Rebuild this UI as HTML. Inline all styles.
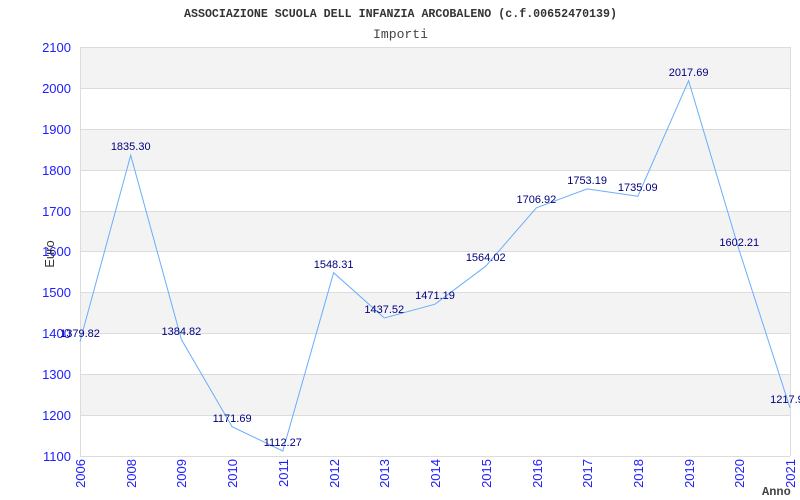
<!DOCTYPE html>
<html><head><meta charset="utf-8"><style>html,body{margin:0;padding:0;background:#fff;width:800px;height:500px;overflow:hidden}</style></head>
<body>
<svg width="800" height="500" viewBox="0 0 800 500" xmlns="http://www.w3.org/2000/svg">
<text x="184" y="17" font-family="Liberation Mono, monospace" font-size="12" font-weight="bold" fill="#333" textLength="433" lengthAdjust="spacingAndGlyphs">ASSOCIAZIONE SCUOLA DELL INFANZIA ARCOBALENO (c.f.00652470139)</text>
<text x="373" y="38" font-family="Liberation Mono, monospace" font-size="13" fill="#444" textLength="55" lengthAdjust="spacingAndGlyphs">Importi</text>
<g fill="#f3f3f3">
<rect x="80" y="47" width="710" height="41"/>
<rect x="80" y="129" width="710" height="41"/>
<rect x="80" y="211" width="710" height="41"/>
<rect x="80" y="292" width="710" height="41"/>
<rect x="80" y="374" width="710" height="41"/>
</g>
<g stroke="#dcdcdc" stroke-width="1">
<line x1="80" y1="47.5" x2="790" y2="47.5"/><line x1="80" y1="88.5" x2="790" y2="88.5"/>
<line x1="80" y1="129.5" x2="790" y2="129.5"/><line x1="80" y1="170.5" x2="790" y2="170.5"/>
<line x1="80" y1="211.5" x2="790" y2="211.5"/><line x1="80" y1="251.5" x2="790" y2="251.5"/>
<line x1="80" y1="292.5" x2="790" y2="292.5"/><line x1="80" y1="333.5" x2="790" y2="333.5"/>
<line x1="80" y1="374.5" x2="790" y2="374.5"/><line x1="80" y1="415.5" x2="790" y2="415.5"/>
<line x1="80" y1="456.5" x2="790" y2="456.5"/>
<line x1="80.5" y1="47" x2="80.5" y2="456"/><line x1="790.5" y1="47" x2="790.5" y2="456"/>
</g>
<g font-family="Liberation Sans, sans-serif" font-size="13" fill="#2020ff" text-anchor="end">
<text x="71" y="52">2100</text><text x="71" y="93">2000</text><text x="71" y="134">1900</text>
<text x="71" y="175">1800</text><text x="71" y="216">1700</text><text x="71" y="256">1600</text>
<text x="71" y="297">1500</text><text x="71" y="338">1400</text><text x="71" y="379">1300</text>
<text x="71" y="420">1200</text><text x="71" y="461">1100</text>
</g>
<g font-family="Liberation Sans, sans-serif" font-size="13" fill="#2020ff" text-anchor="end">
<text transform="translate(85,459) rotate(-90)">2006</text>
<text transform="translate(136,459) rotate(-90)">2008</text>
<text transform="translate(186,459) rotate(-90)">2009</text>
<text transform="translate(237,459) rotate(-90)">2010</text>
<text transform="translate(288,459) rotate(-90)">2011</text>
<text transform="translate(339,459) rotate(-90)">2012</text>
<text transform="translate(389,459) rotate(-90)">2013</text>
<text transform="translate(440,459) rotate(-90)">2014</text>
<text transform="translate(491,459) rotate(-90)">2015</text>
<text transform="translate(542,459) rotate(-90)">2016</text>
<text transform="translate(592,459) rotate(-90)">2017</text>
<text transform="translate(643,459) rotate(-90)">2018</text>
<text transform="translate(694,459) rotate(-90)">2019</text>
<text transform="translate(744,459) rotate(-90)">2020</text>
<text transform="translate(795,459) rotate(-90)">2021</text>
</g>
<text transform="translate(54,254) rotate(-90)" text-anchor="middle" font-family="Liberation Sans, sans-serif" font-size="13" fill="#333">Euro</text>
<text x="762" y="495" font-family="Liberation Mono, monospace" font-size="12" font-weight="bold" fill="#444">Anno</text>
<polyline fill="none" stroke="#6aaefc" stroke-width="1" points="80,341.5 130.7,155.2 181.4,339.5 232.1,426.7 282.8,451 333.6,272.7 384.3,318 435,304.2 485.7,266.2 536.4,207.8 587.1,188.9 637.8,196.3 688.6,80.7 739.3,250.6 790,407.8"/>
<g font-family="Liberation Sans, sans-serif" font-size="11" fill="#000080" text-anchor="middle">
<text x="80" y="337">1379.82</text>
<text x="130.7" y="150">1835.30</text>
<text x="181.4" y="335">1384.82</text>
<text x="232.1" y="422">1171.69</text>
<text x="282.8" y="446">1112.27</text>
<text x="333.6" y="268">1548.31</text>
<text x="384.3" y="313">1437.52</text>
<text x="435" y="299">1471.19</text>
<text x="485.7" y="261">1564.02</text>
<text x="536.4" y="203">1706.92</text>
<text x="587.1" y="184">1753.19</text>
<text x="637.8" y="191">1735.09</text>
<text x="688.6" y="76">2017.69</text>
<text x="739.3" y="246">1602.21</text>
<text x="790" y="403">1217.93</text>
</g>
</svg>
</body></html>
